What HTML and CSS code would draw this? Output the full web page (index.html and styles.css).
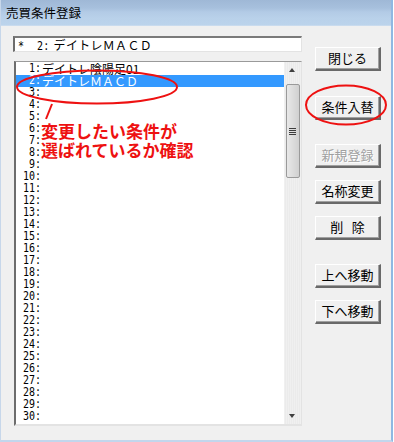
FILE: index.html
```html
<!DOCTYPE html>
<html lang="ja">
<head>
    <meta charset="UTF-8">
    <title>売買条件登録</title>
    <link rel="stylesheet" href="styles.css">
</head>
<body>
    <div class="window">
        <div class="titlebar">売買条件登録</div>
        <div class="client">
            <div class="left">
                <div class="textbox"><span class="mono">*  2:</span>デイトレＭＡＣＤ</div>
                <div class="listbox">
                    <div class="items" id="items"></div>
                    <div class="scrollbar">
                        <div class="arrow up"></div>
                        <div class="thumb"><span class="grip"></span></div>
                        <div class="track"></div>
                        <div class="arrow down"></div>
                    </div>
                </div>
            </div>
            <div class="buttons">
                <div class="btn b-close">閉じる</div>
                <div class="btn b-swap">条件入替</div>
                <div class="btn b-new disabled">新規登録</div>
                <div class="btn b-rename">名称変更</div>
                <div class="btn b-del">削&nbsp;&nbsp;&nbsp;除</div>
                <div class="btn b-up">上へ移動</div>
                <div class="btn b-down">下へ移動</div>
            </div>
        </div>

        <!-- red annotations drawn over the dialog -->
        <svg class="marks" width="394" height="442" viewBox="0 0 394 442">
            <ellipse cx="97" cy="87" rx="80" ry="16.5" fill="none" stroke="#ee1111" stroke-width="2"/>
            <line x1="52" y1="104" x2="46" y2="119" stroke="#ee1111" stroke-width="2"/>
            <ellipse cx="346" cy="105" rx="40" ry="19.5" fill="none" stroke="#ee1111" stroke-width="2"/>
        </svg>
        <div class="note">変更したい条件が<br>選ばれているか確認</div>
    </div>

    <script>
        let items = document.getElementById('items');
        let names = { 1: 'デイトレ陰陽足01', 2: 'デイトレＭＡＣＤ' };
        let html = '';
        for (let i = 1; i <= 30; i++) {
            let cls = i === 2 ? 'row selected' : 'row';
            html += `<div class="${cls}"><span class="num">${i}:</span><span class="name">${names[i] || ''}</span></div>`;
        }
        items.innerHTML = html;
    </script>
</body>
</html>
```

FILE: styles.css
```css
* {
    margin: 0;
    padding: 0;
    box-sizing: border-box;
}

body {
    width: 394px;
    height: 442px;
    background: #ffffff;
    font-family: "Noto Sans CJK JP", sans-serif;
    font-size: 12px;
    color: #000;
}

.window {
    position: relative;
    width: 393px;
    height: 442px;
    background: #f0f0f0;
    border-left: 1px solid #c7d7ea;
    border-right: 2px solid #8fb8e2;
    border-bottom: 2px solid #c2d6ec;
    display: flex;
    flex-direction: column;
}

.titlebar {
    height: 26px;
    padding: 4px 0 0 5px;
    font-size: 12.5px;
    line-height: 18px;
    background: linear-gradient(#9fb8d6 0, #a7c0dd 8px, #b3cbe6 12px, #b9d1ea 18px, #bcd4ec 26px);
    border-bottom: 1px solid #c9dbee;
}

.client {
    flex: 1;
    display: flex;
    padding: 10px 0 0 12px;
}

.left {
    width: 289px;
    display: flex;
    flex-direction: column;
}

.textbox {
    height: 16px;
    background: #fff;
    border-top: 2px solid #7a7a7a;
    border-left: 2px solid #6d6d6d;
    border-right: 1px solid #e3e3e3;
    border-bottom: 1px solid #e3e3e3;
    padding-left: 3px;
    line-height: 13px;
    font-size: 12px;
    white-space: pre;
    letter-spacing: 0.3px;
}

.mono {
    display: inline-block;
    font-family: "DejaVu Sans Mono", monospace;
    font-size: 10px;
    line-height: 12px;
    margin-right: 4px;
    transform: scaleY(1.15);
}

.listbox {
    margin-top: 9px;
    margin-left: 1px;
    height: 365px;
    background: #fff;
    border-top: 1px solid #9a9a9a;
    border-left: 2px solid #6d6d6d;
    border-right: 1px solid #e3e3e3;
    border-bottom: 2px solid #e3e3e3;
    display: flex;
}

.items {
    flex: 1;
    padding-top: 1px;
}

.row {
    height: 12px;
    line-height: 12px;
    display: flex;
    white-space: nowrap;
    font-size: 12px;
}

.row.selected {
    background: #3399ff;
    color: #fff;
}

.num {
    display: inline-block;
    width: 26px;
    height: 12px;
    text-align: right;
    font-family: "DejaVu Sans Mono", monospace;
    font-size: 10px;
    line-height: 12px;
    padding-right: 1px;
    transform: scaleY(1.15);
}

.scrollbar {
    width: 17px;
    background: repeating-linear-gradient(90deg, #f0f0f0 0, #f0f0f0 1px, #ebebeb 1px, #ebebeb 2px);
    display: flex;
    flex-direction: column;
    align-items: center;
}

.arrow {
    height: 17px;
    width: 17px;
    position: relative;
}

.arrow::after {
    content: "";
    position: absolute;
    left: 5px;
    width: 0;
    height: 0;
    border-left: 3.5px solid transparent;
    border-right: 3.5px solid transparent;
}

.arrow.up::after {
    top: 6px;
    border-bottom: 4px solid #404040;
}

.arrow.down::after {
    top: 7px;
    border-top: 4px solid #404040;
}

.thumb {
    margin-top: 5px;
    width: 14px;
    height: 94px;
    border: 1px solid #9a9a9a;
    border-radius: 2px;
    background: linear-gradient(90deg, #e8e8e8, #dcdcdc 50%, #d0d0d0);
    display: flex;
    align-items: center;
    justify-content: center;
}

.grip {
    width: 7px;
    height: 7px;
    background: repeating-linear-gradient(#3c3c3c 0, #3c3c3c 1px, transparent 1px, transparent 2px);
}

.track {
    flex: 1;
}

.buttons {
    margin-left: 13px;
    display: flex;
    flex-direction: column;
}

.btn {
    width: 66px;
    height: 24px;
    background: #f0f0f0;
    border-top: 1px solid #ffffff;
    border-left: 1px solid #ffffff;
    border-right: 2px solid #696969;
    border-bottom: 2px solid #696969;
    box-shadow: inset -1px -1px 0 #a0a0a0;
    text-align: center;
    line-height: 20px;
    font-size: 13px;
    white-space: pre;
}

.btn.disabled {
    color: #a0a0a0;
    text-shadow: 1px 1px 0 #fff;
}

.b-close { margin-top: 11px; }
.b-swap { margin-top: 25px; }
.b-new { margin-top: 24px; }
.b-rename { margin-top: 12px; }
.b-del { margin-top: 12px; }
.b-up { margin-top: 24px; }
.b-down { margin-top: 12px; }

.marks {
    position: absolute;
    left: -1px;
    top: 0;
    pointer-events: none;
}

.note {
    position: absolute;
    left: 40px;
    top: 121px;
    color: #ee1111;
    font-size: 17px;
    font-weight: bold;
    line-height: 19px;
}
```
